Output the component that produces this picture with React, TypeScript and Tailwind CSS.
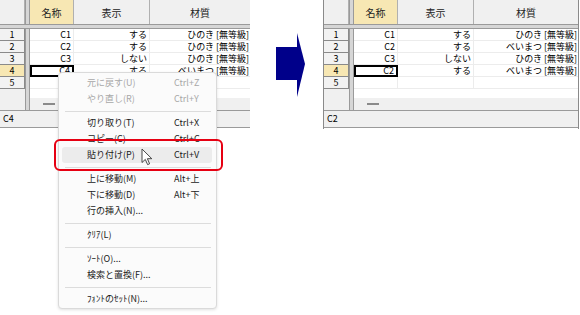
import React from "react";

type Row = [string, string, string];

const leftRows: Row[] = [
  ["C1", "する", "ひのき [無等級]"],
  ["C2", "する", "ひのき [無等級]"],
  ["C3", "しない", "ひのき [無等級]"],
  ["C4", "する", "べいまつ [無等級]"],
  ["", "", ""],
];

const rightRows: Row[] = [
  ["C1", "する", "ひのき [無等級]"],
  ["C2", "する", "べいまつ [無等級]"],
  ["C3", "しない", "ひのき [無等級]"],
  ["C2", "する", "べいまつ [無等級]"],
  ["", "", ""],
];

function Sep() {
  return <div className="w-[5px] shrink-0 border-x border-[#9a9a9a] bg-[#d6d6d6]" />;
}

function Grid({ rows, status }: { rows: Row[]; status: string }) {
  return (
    <div className="flex h-[129px] flex-col bg-white">
      {/* header */}
      <div className="flex h-[25px] shrink-0 border-b border-[#9a9a9a] text-[10px] text-[#222]">
        <div className="w-[25px] shrink-0 border-r border-[#b0b0b0] bg-[#f0f0f0]" />
        <Sep />
        <div className="flex w-[44px] shrink-0 items-center justify-center border-r border-[#b0b0b0] bg-[#f7e7b3]">名称</div>
        <div className="flex w-[76px] shrink-0 items-center justify-center border-r border-[#b0b0b0] bg-[#f0f0f0]">表示</div>
        <div className="flex flex-1 items-center justify-center bg-[#f0f0f0]">材質</div>
      </div>
      {/* horizontal separator */}
      <div className="h-[4px] shrink-0 border-b border-[#9a9a9a] bg-[#d6d6d6]" />
      {/* rows */}
      {rows.map((r, i) => {
        const sel = i === 3;
        return (
          <div key={i} className="flex h-[12px] shrink-0 text-[9px] leading-[12px] text-black">
            <div
              className={`flex w-[25px] shrink-0 items-center justify-center border-b border-r border-[#8a8a8a] ${
                sel ? "bg-[#f7e7b3]" : "bg-[#f2f2f2]"
              }`}
            >
              {i + 1}
            </div>
            <Sep />
            <div
              className={`w-[44px] shrink-0 overflow-hidden pr-[2px] text-right ${
                sel ? "border-2 border-black leading-[8px]" : "border-b border-r border-[#ececec]"
              }`}
            >
              {r[0]}
            </div>
            <div className="w-[76px] shrink-0 whitespace-nowrap border-b border-r border-[#ececec] pr-[2px] text-right">
              {r[1]}
            </div>
            <div className="flex-1 whitespace-nowrap border-b border-[#ececec] pr-[1px] text-right">{r[2]}</div>
          </div>
        );
      })}
      {/* white space */}
      <div className="flex h-[9px] shrink-0">
        <div className="w-[25px] shrink-0 bg-[#f0f0f0]" />
        <Sep />
        <div className="flex-1 bg-white" />
      </div>
      {/* scroll band */}
      <div className="flex h-[12px] shrink-0">
        <div className="w-[25px] shrink-0 bg-[#f0f0f0]" />
        <Sep />
        <div className="flex flex-1 items-center bg-[#f0f0f0] pl-[13px]">
          <div className="h-[2px] w-[12px] bg-[#8a8a8a]" />
        </div>
      </div>
      {/* status */}
      <div className="flex h-[18px] shrink-0 items-center border-y border-[#9a9a9a] bg-[#f0f0f0] pl-[3px] text-[9px] text-black">
        {status}
      </div>
    </div>
  );
}

type Item = { t: string; k?: string; dis?: boolean; hi?: boolean } | "sep";

const items: Item[] = [
  { t: "元に戻す(U)", k: "Ctrl+Z", dis: true },
  { t: "やり直し(R)", k: "Ctrl+Y", dis: true },
  "sep",
  { t: "切り取り(T)", k: "Ctrl+X" },
  { t: "コピー(C)", k: "Ctrl+C" },
  { t: "貼り付け(P)", k: "Ctrl+V", hi: true },
  "sep",
  { t: "上に移動(M)", k: "Alt+上" },
  { t: "下に移動(D)", k: "Alt+下" },
  { t: "行の挿入(N)..." },
  "sep",
  { t: "ｸﾘｱ(L)" },
  "sep",
  { t: "ｿｰﾄ(O)..." },
  { t: "検索と置換(F)..." },
  "sep",
  { t: "ﾌｫﾝﾄのｾｯﾄ(N)..." },
];

function Menu() {
  return (
    <div className="absolute left-[58px] top-[72px] w-[159px] rounded-[4px] border border-[#dadada] bg-[#fbfbfb] pb-[1px] pt-[2px] text-[9px] shadow-[0_1px_3px_rgba(0,0,0,0.12)]">
      {items.map((it, i) =>
        it === "sep" ? (
          <div key={i} className="flex h-[8px] items-center pl-[6px] pr-[5px]">
            <div className="h-px w-full bg-[#dcdcdc]" />
          </div>
        ) : (
          <div key={i} className="h-[16px] pl-[3px] pr-[4px]">
            <div
              className={`flex h-full items-center rounded-[3px] ${it.hi ? "bg-[#ececec]" : ""} ${
                it.dis ? "text-[#a8a8a8]" : "text-[#1a1a1a]"
              }`}
            >
              <span className="w-[112px] shrink-0 whitespace-nowrap pl-[25px]">{it.t}</span>
              <span className="whitespace-nowrap">{it.k ?? ""}</span>
            </div>
          </div>
        )
      )}
    </div>
  );
}

export default function App() {
  return (
    <div className="relative h-[315px] w-[580px] overflow-hidden bg-white font-['Noto_Sans_CJK_JP','Noto_Sans',sans-serif]">
      <div className="flex items-start">
        <div className="w-[250px] shrink-0">
          <Grid rows={leftRows} status="C4" />
        </div>
        <div className="w-[73px] shrink-0 pl-[26px] pt-[33px]">
          <svg width="29" height="64" viewBox="0 0 29 64">
            <rect x="0" y="14" width="21.5" height="33" fill="#00008a" />
            <polygon points="21,0 29,31 21,64" fill="#00008a" />
          </svg>
        </div>
        <div className="w-[256px] shrink-0 border-x border-[#8a8a8a]">
          <Grid rows={rightRows} status="C2" />
        </div>
      </div>

      <Menu />

      {/* red highlight box */}
      <div className="absolute left-[54px] top-[139px] h-[32px] w-[169px] rounded-[6px] border-2 border-[#e60012]" />

      {/* mouse cursor */}
      <svg className="absolute left-[141px] top-[148px]" width="12" height="18" viewBox="0 0 12 18">
        <path
          d="M1 1 L1 14.5 L4.3 11.4 L6.6 16.6 L8.6 15.8 L6.4 10.7 L10.8 10.7 Z"
          fill="#ffffff"
          stroke="#333"
          strokeWidth="0.9"
          strokeLinejoin="round"
        />
      </svg>
    </div>
  );
}
